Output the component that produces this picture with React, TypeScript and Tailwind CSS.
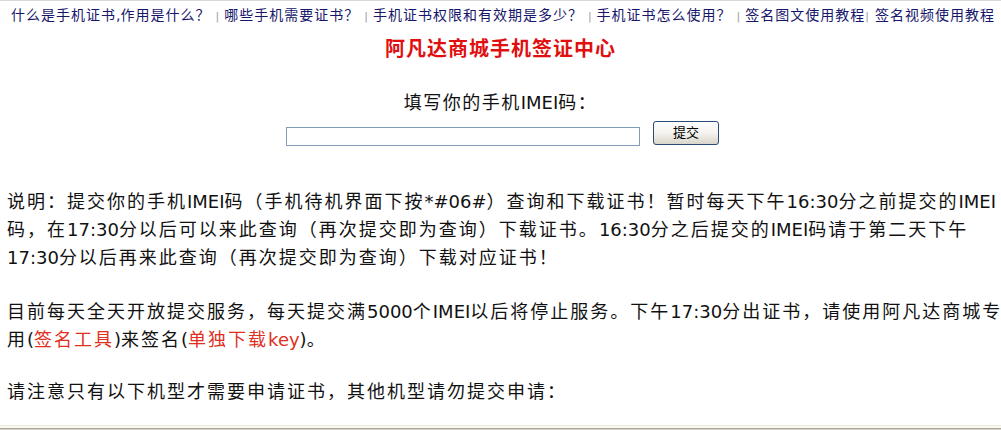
import React from 'react';

// ASCII runs keep normal spacing; CJK runs get the wider pitch from the parent tracking
function T({ s }: { s: string }) {
  return (
    <>
      {s.split(/([\x20-\x7e]+)/).map((p, i) =>
        /[\x20-\x7e]/.test(p) ? (
          <span key={i} className="tracking-normal">
            {p}
          </span>
        ) : (
          p
        )
      )}
    </>
  );
}

const navItems = [
  '什么是手机证书,作用是什么？',
  '哪些手机需要证书？',
  '手机证书权限和有效期是多少？',
  '手机证书怎么使用？',
  '签名图文使用教程',
  '签名视频使用教程',
];

export default function App() {
  return (
    <div className="flex h-[430px] flex-col overflow-hidden border-t border-[#d8d8d8] bg-white font-['DejaVu_Sans','Noto_Sans_CJK_SC',sans-serif] text-[#111]">
      <div className="flex-1">
        {/* top links */}
        <nav className="flex items-baseline whitespace-nowrap pl-[11px] pt-[4px] text-[14px] leading-[20px] tracking-[1px] text-[#16166a]">
          {navItems.map((label, i) => (
            <React.Fragment key={label}>
              {i > 0 && (
                <span
                  className={
                    i === 5
                      ? 'mr-[6px] text-[11px] tracking-normal text-[#9a9a9a]'
                      : 'mx-[5px] text-[11px] tracking-normal text-[#9a9a9a]'
                  }
                >
                  |
                </span>
              )}
              <a className="cursor-pointer">
                <T s={label} />
              </a>
            </React.Fragment>
          ))}
        </nav>

        <h1 className="mt-[8px] text-center text-[20px] font-bold leading-[28px] tracking-[1px] text-[#e01010]">
          阿凡达商城手机签证中心
        </h1>

        <p className="mt-[26px] text-center text-[18px] leading-[28px] tracking-[1.5px] text-[#111]">
          <T s="填写你的手机IMEI码：" />
        </p>

        <form className="mt-[4px] flex items-start justify-center gap-[13px] pl-[4px]">
          <input
            type="text"
            className="mt-[6px] h-[19px] w-[354px] border border-[#7f9db9] bg-white outline-none"
          />
          <button
            type="button"
            className="h-[24px] w-[66px] rounded-[3px] border border-[#2a4a7a] bg-gradient-to-b from-white via-[#f4f3ee] to-[#d9d5ca] text-[13px] leading-[20px] text-black"
          >
            提交
          </button>
        </form>

        <div className="whitespace-nowrap pl-[7px] text-[18px] leading-[28px] tracking-[2px]">
          <p className="mt-[42px]">
            <T s="说明：提交你的手机IMEI码（手机待机界面下按*#06#）查询和下载证书！暂时每天下午16:30分之前提交的IMEI" />
            <br />
            <T s="码，在17:30分以后可以来此查询（再次提交即为查询）下载证书。16:30分之后提交的IMEI码请于第二天下午" />
            <br />
            <T s="17:30分以后再来此查询（再次提交即为查询）下载对应证书！" />
          </p>

          <p className="mt-[26px]">
            <T s="目前每天全天开放提交服务，每天提交满5000个IMEI以后将停止服务。下午17:30分出证书，请使用阿凡达商城专" />
            <br />
            用<span className="tracking-normal">(</span>
            <a className="cursor-pointer text-[#e0301e]">签名工具</a>
            <span className="tracking-normal">)</span>来签名<span className="tracking-normal">(</span>
            <a className="cursor-pointer text-[#e0301e]">
              <T s="单独下载key" />
            </a>
            <span className="tracking-normal">)</span>。
          </p>

          <p className="mt-[24px]">请注意只有以下机型才需要申请证书，其他机型请勿提交申请：</p>
        </div>
      </div>

      {/* window frame at the bottom */}
      <div className="h-[1px] bg-[#ecead8]" />
      <div className="h-[2px] bg-[#f8f7f0]" />
      <div className="h-[1px] bg-[#aca899]" />
      <div className="h-[1px] bg-[#d4d0c8]" />
    </div>
  );
}
